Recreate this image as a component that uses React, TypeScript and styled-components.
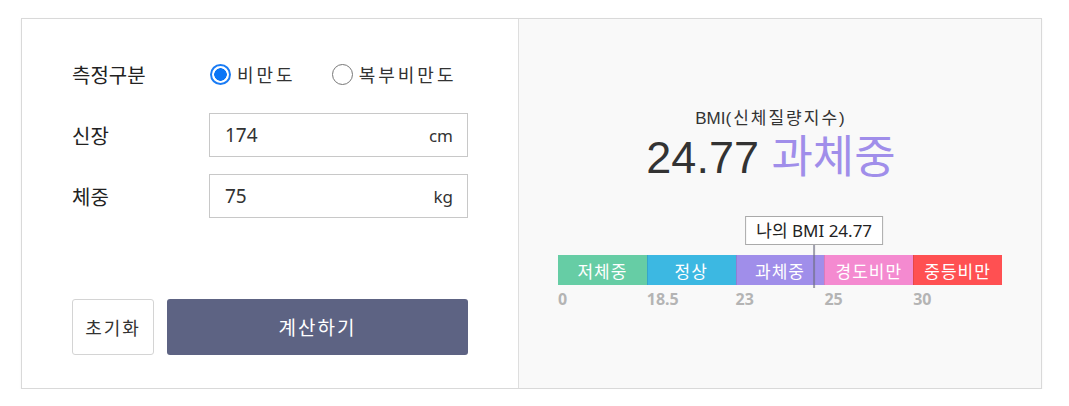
import { useState } from "react"
import styled, { createGlobalStyle } from "styled-components"

const GlobalStyle = createGlobalStyle`
  body {
    margin: 0;
    background: #fff;
    font-family: "Noto Sans", "Noto Sans CJK KR", sans-serif;
    color: #222;
  }
`

const segments = [
  { label: "저체중", color: "#66cda5", from: "0" },
  { label: "정상", color: "#3cb8e2", from: "18.5" },
  { label: "과체중", color: "#a08eea", from: "23" },
  { label: "경도비만", color: "#f48ad0", from: "25" },
  { label: "중등비만", color: "#ff5052", from: "30" },
]

// 23 ~ 25 segment spans index 2, value position inside that segment
const bmi = 24.77
const markerPct = ((2 + (bmi - 23) / 2) / segments.length) * 100

export default function App() {
  const [type, setType] = useState("bmi")
  const [height, setHeight] = useState("174")
  const [weight, setWeight] = useState("75")

  return (
    <Page>
      <GlobalStyle />
      <Card>
        <FormPanel>
          <Fields>
            <Row>
              <Label>측정구분</Label>
              <Radios>
                <RadioLabel>
                  <Radio
                    type="radio"
                    name="type"
                    checked={type === "bmi"}
                    onChange={() => setType("bmi")}
                  />
                  비만도
                </RadioLabel>
                <RadioLabel>
                  <Radio
                    type="radio"
                    name="type"
                    checked={type === "waist"}
                    onChange={() => setType("waist")}
                  />
                  복부비만도
                </RadioLabel>
              </Radios>
            </Row>
            <Row>
              <Label>신장</Label>
              <InputBox>
                <Input value={height} onChange={e => setHeight(e.target.value)} />
                <Unit>cm</Unit>
              </InputBox>
            </Row>
            <Row>
              <Label>체중</Label>
              <InputBox>
                <Input value={weight} onChange={e => setWeight(e.target.value)} />
                <Unit>kg</Unit>
              </InputBox>
            </Row>
          </Fields>
          <Buttons>
            <ResetButton>초기화</ResetButton>
            <SubmitButton>계산하기</SubmitButton>
          </Buttons>
        </FormPanel>
        <ResultPanel>
          <Headline>
            <Title>
              BMI<Spaced>(신체질량지수)</Spaced>
            </Title>
            <Score>
              24.77 <Grade>과체중</Grade>
            </Score>
          </Headline>
          <Chart>
            <Marker style={{ left: `${markerPct}%` }}>
              <Bubble>나의 BMI 24.77</Bubble>
              <Stem />
            </Marker>
            <Bar>
              {segments.map(s => (
                <Segment key={s.label} $color={s.color}>
                  {s.label}
                </Segment>
              ))}
            </Bar>
            <Scale>
              {segments.map(s => (
                <Tick key={s.from}>{s.from}</Tick>
              ))}
            </Scale>
          </Chart>
        </ResultPanel>
      </Card>
    </Page>
  )
}

const Page = styled.div`
  padding: 18px 27px 0 21px;
`

const Card = styled.div`
  display: flex;
  height: 371px;
  border: 1px solid #d9d9d9;
  box-shadow: 0 1px 2px rgba(0, 0, 0, 0.06);
  box-sizing: border-box;
`

const FormPanel = styled.div`
  width: 496px;
  flex-shrink: 0;
  box-sizing: border-box;
  padding: 33px 50px 33px 50px;
  display: flex;
  flex-direction: column;
  justify-content: space-between;
  background: #fff;
`

const Fields = styled.div`
  display: flex;
  flex-direction: column;
  gap: 17px;
`

const Row = styled.div`
  display: flex;
  align-items: center;
  height: 44px;
`

const Label = styled.div`
  width: 137px;
  flex-shrink: 0;
  font-size: 20px;
  color: #222;
`

const Radios = styled.div`
  display: flex;
  gap: 35px;
`

const RadioLabel = styled.label`
  display: flex;
  align-items: center;
  gap: 6px;
  font-size: 18px;
  letter-spacing: 3px;
  color: #333;
  cursor: pointer;
`

const Radio = styled.input`
  appearance: none;
  margin: 0 0 0 1px;
  width: 21px;
  height: 21px;
  border-radius: 50%;
  border: 1px solid #777;
  background: #fff;
  box-sizing: border-box;
  cursor: pointer;

  &:checked {
    border: 2px solid #1a7cf5;
    background: radial-gradient(circle, #0b75f5 0 6px, #fff 6.5px);
  }
`

const InputBox = styled.div`
  flex: 1;
  min-width: 0;
  height: 44px;
  display: flex;
  align-items: center;
  border: 1px solid #c8c8c8;
  box-sizing: border-box;
  padding: 0 14px 0 15px;
  background: #fff;
`

const Input = styled.input`
  flex: 1;
  width: 100%;
  min-width: 0;
  border: none;
  outline: none;
  font-family: inherit;
  font-size: 19px;
  color: #333;
  padding: 0;
  background: transparent;
`

const Unit = styled.span`
  font-size: 17px;
  color: #333;
`

const Buttons = styled.div`
  display: flex;
  gap: 13px;
  height: 56px;
`

const ResetButton = styled.button`
  width: 82px;
  border: 1px solid #d4d4d4;
  border-radius: 3px;
  background: #fff;
  font-family: inherit;
  font-size: 18px;
  letter-spacing: 2px;
  color: #333;
  cursor: pointer;
`

const SubmitButton = styled.button`
  flex: 1;
  border: none;
  border-radius: 3px;
  background: #5d6383;
  color: #fff;
  font-family: inherit;
  font-size: 19px;
  letter-spacing: 2px;
  cursor: pointer;
`

const ResultPanel = styled.div`
  flex: 1;
  background: #f9f9f9;
  border-left: 1px solid #dedede;
  display: flex;
  flex-direction: column;
  align-items: center;
  padding-top: 89px;
  box-sizing: border-box;
`

const Headline = styled.div`
  display: flex;
  flex-direction: column;
  align-items: center;
  margin-right: 18px;
`

const Title = styled.div`
  font-family: "Liberation Sans", "Noto Sans CJK KR", sans-serif;
  font-size: 17px;
  line-height: 22px;
  color: #333;
`

const Spaced = styled.span`
  letter-spacing: 2px;
`

const Score = styled.div`
  font-family: "Liberation Sans", "Noto Sans CJK KR", sans-serif;
  font-size: 45px;
  line-height: 46px;
  margin-top: 5px;
  color: #333;
`

const Grade = styled.span`
  color: #a08eea;
`

const Chart = styled.div`
  position: relative;
  width: 444px;
  margin-top: 74px;
`

const Marker = styled.div`
  position: absolute;
  bottom: 22px;
  display: flex;
  flex-direction: column;
  align-items: center;
  transform: translateX(-50%);
`

const Bubble = styled.div`
  height: 29px;
  padding: 0 10px;
  box-sizing: border-box;
  border: 1px solid #aaa;
  background: #fff;
  font-size: 17px;
  line-height: 27px;
  color: #222;
  white-space: nowrap;
`

const Stem = styled.div`
  width: 2px;
  height: 43px;
  background: rgba(110, 110, 130, 0.65);
`

const Bar = styled.div`
  display: grid;
  grid-template-columns: repeat(5, 1fr);
  height: 30px;
`

const Segment = styled.div<{ $color: string }>`
  background: ${p => p.$color};
  color: #fff;
  font-size: 17px;
  letter-spacing: 1px;
  display: flex;
  align-items: center;
  justify-content: center;
  & + & {
    box-shadow: inset 1px 0 0 rgba(0, 0, 0, 0.1);
  }
`

const Scale = styled.div`
  display: grid;
  grid-template-columns: repeat(5, 1fr);
  margin-top: 3px;
`

const Tick = styled.div`
  font-size: 16px;
  font-weight: bold;
  color: #b4b4b4;
`
